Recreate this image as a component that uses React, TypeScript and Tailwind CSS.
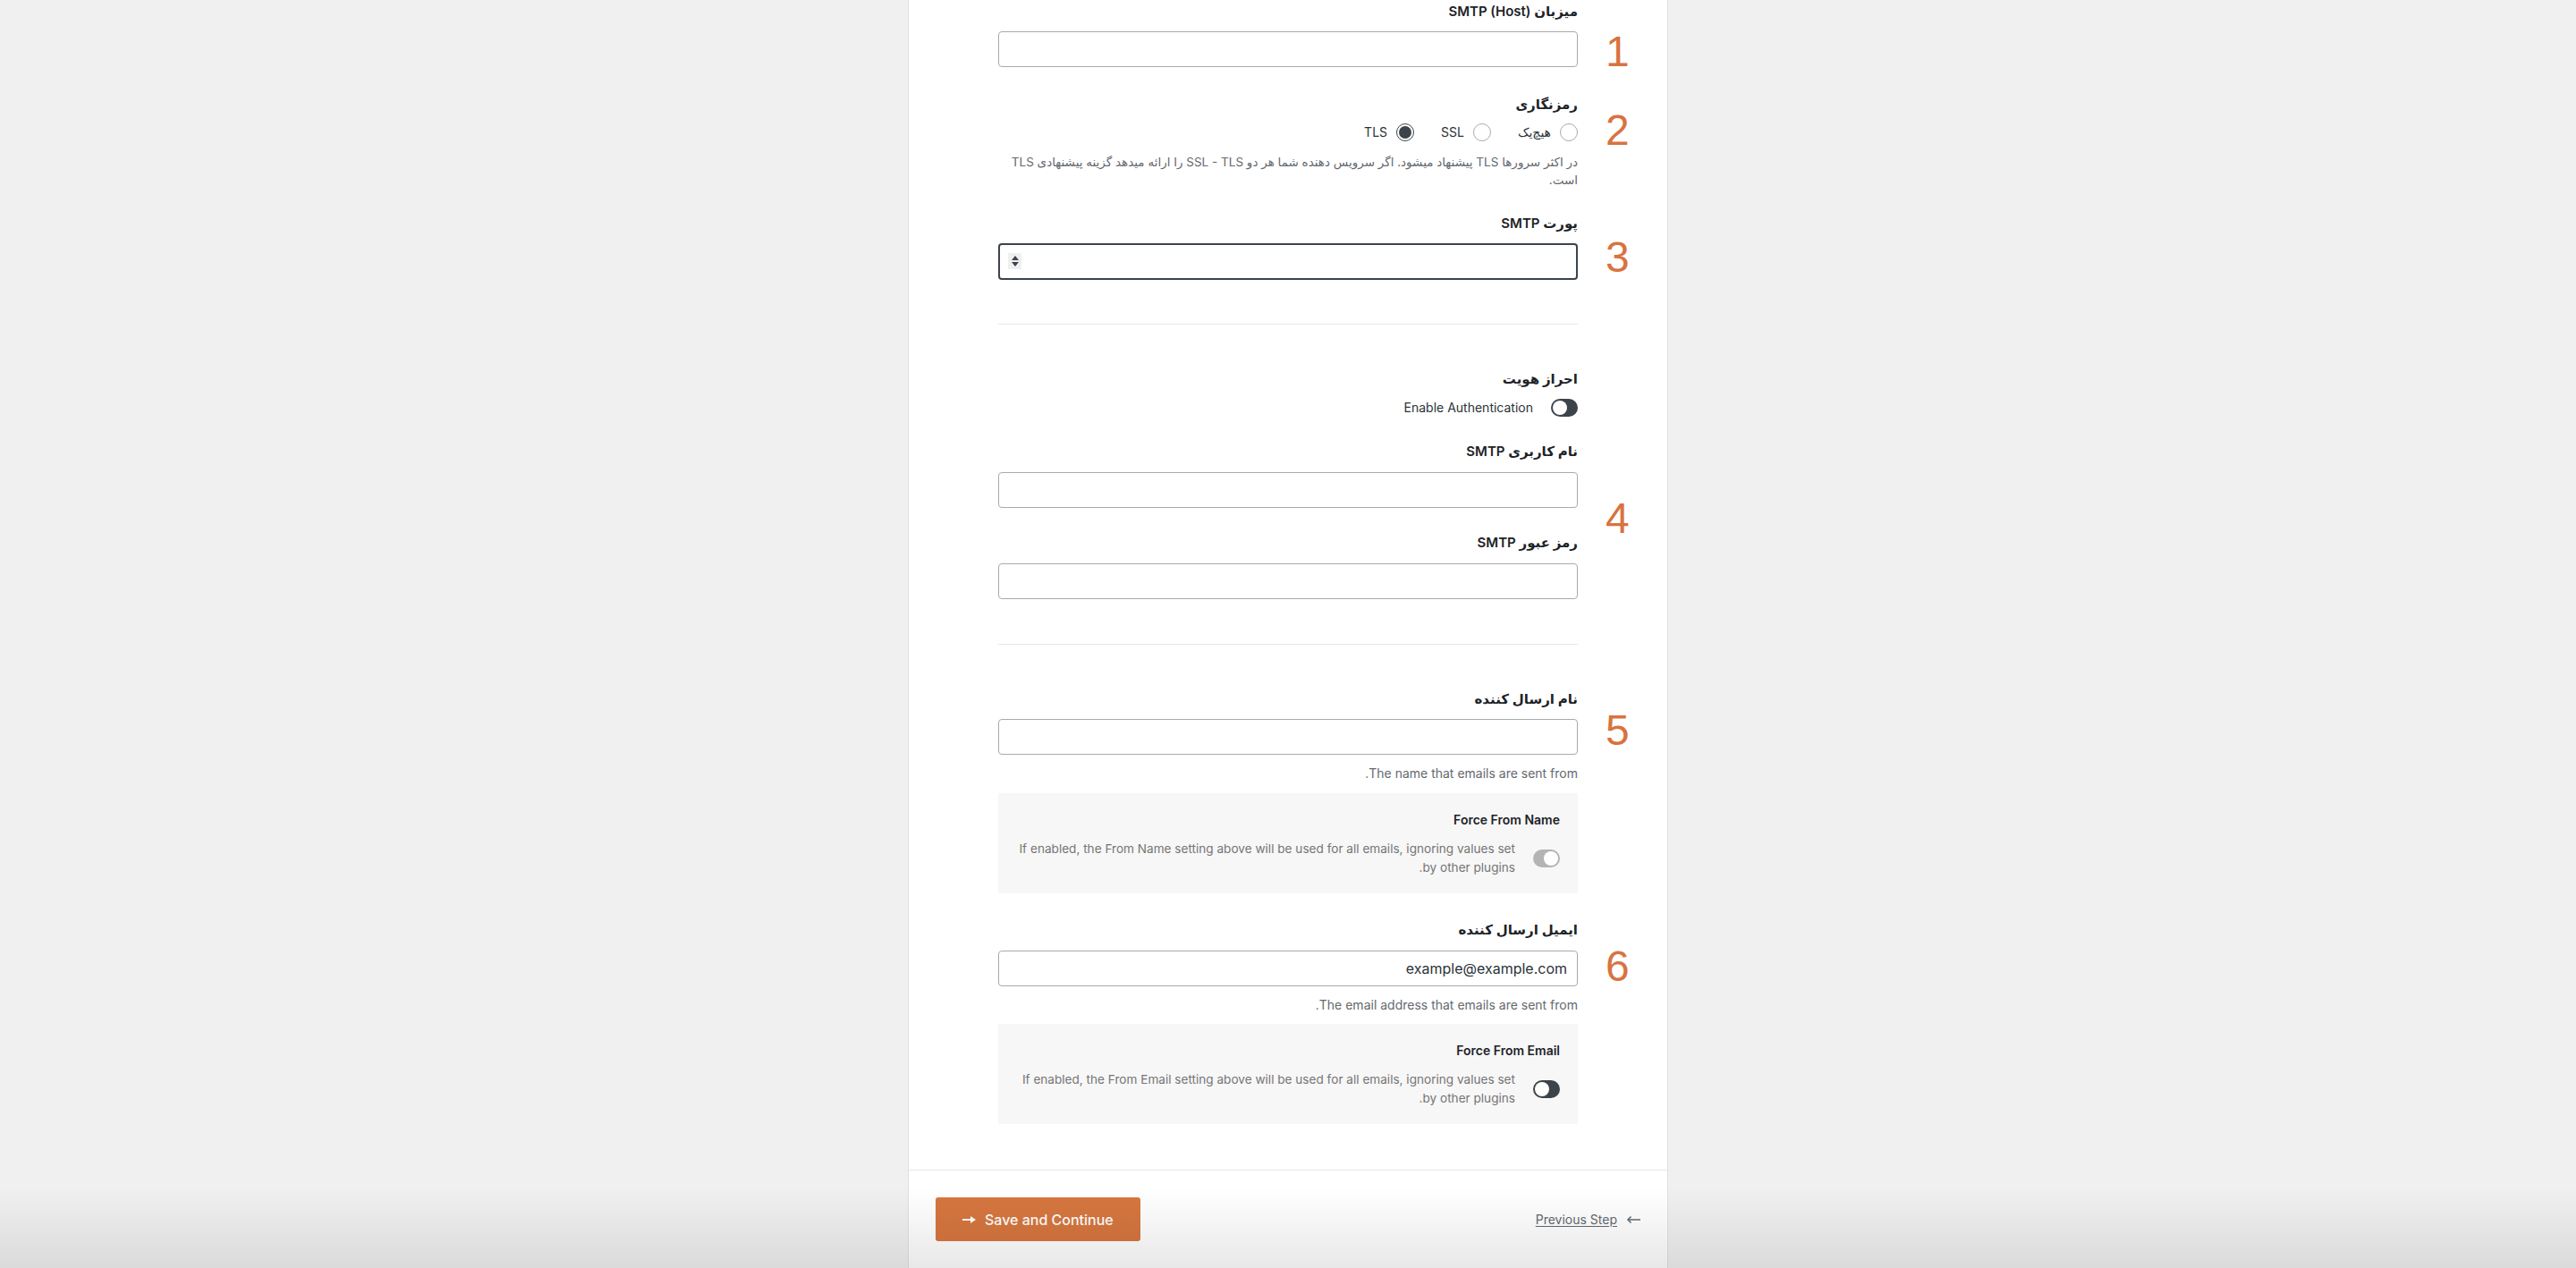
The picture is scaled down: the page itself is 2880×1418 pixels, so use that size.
import React from "react";

function Label({ children, className = "" }: { children: React.ReactNode; className?: string }) {
  return (
    <div className={"text-[15px] font-semibold leading-6 text-[#1d2327] " + className}>{children}</div>
  );
}

function TextInput({ value, className = "" }: { value?: string; className?: string }) {
  return (
    <div
      className={
        "flex h-10 w-full items-center rounded-[4px] border border-[#a7aaad] bg-white px-[11px] text-[16px] text-[#2c3338] " +
        className
      }
    >
      {value ? <span dir="ltr">{value}</span> : null}
    </div>
  );
}

function Toggle({ variant }: { variant: "dark" | "grey" }) {
  if (variant === "dark") {
    return (
      <div dir="ltr" className="flex h-5 w-[30px] shrink-0 items-center justify-start rounded-full bg-[#3c434a] p-[2px]">
        <div className="h-4 w-4 rounded-full bg-white" />
      </div>
    );
  }
  return (
    <div dir="ltr" className="flex h-5 w-[30px] shrink-0 items-center justify-end rounded-full bg-[#b4b4b4] p-[2px]">
      <div className="h-4 w-4 rounded-full bg-white" />
    </div>
  );
}

function Radio({ checked, label }: { checked?: boolean; label: string }) {
  return (
    <div className="flex items-center gap-[10px]">
      <div
        className={
          "flex h-5 w-5 items-center justify-center rounded-full border bg-white " +
          (checked ? "border-[#3c434a]" : "border-[#a7aaad]")
        }
      >
        {checked ? <div className="h-[14px] w-[14px] rounded-full bg-[#3c434a]" /> : null}
      </div>
      <span className="text-[14px] leading-5 text-[#2c3338]">{label}</span>
    </div>
  );
}

function ForceBox({ title, text, variant, className = "" }: { title: string; text: string; variant: "dark" | "grey"; className?: string }) {
  return (
    <div className={"bg-[#f7f7f7] px-5 pb-[18px] pt-[21px] " + className}>
      <div className="text-[14px] font-semibold leading-[18px] text-[#1d2327]">{title}</div>
      <div className="mt-[13px] flex items-center gap-5">
        <Toggle variant={variant} />
        <p className="text-[13.6px] leading-[21px] text-[#757575]">{text}</p>
      </div>
    </div>
  );
}

function Num({ n, top }: { n: string; top: number }) {
  return (
    <div
      className="absolute left-[779px] font-['Liberation_Sans',sans-serif] text-[48px] leading-none text-[#d8733f]"
      style={{ top }}
    >
      {n}
    </div>
  );
}

export default function App() {
  return (
    <div className="relative h-[1418px] overflow-hidden bg-[#f0f0f1] font-['Inter','DejaVu_Sans',sans-serif]">
      <div className="mx-auto flex h-full w-[850px] flex-col border-x border-[#e0e0e0] bg-white">
        <div dir="rtl" className="relative px-[100px] pt-px">
          {/* 1 */}
          <Label>
            میزبان <bdi>SMTP (Host)</bdi>
          </Label>
          <TextInput className="mt-[10px]" />

          {/* 2 */}
          <Label className="mt-[30px]">رمزنگاری</Label>
          <div className="mt-[9px] flex items-center gap-[30px]">
            <Radio label="هیچ‌یک" />
            <Radio label="SSL" />
            <Radio label="TLS" checked />
          </div>
          <p className="mt-[13px] text-[13.5px] leading-5 text-[#646970]">
            در اکثر سرورها TLS پیشنهاد میشود. اگر سرویس دهنده شما هر دو SSL - TLS را ارائه میدهد گزینه پیشنهادی TLS
            <br />
            است.
          </p>

          {/* 3 */}
          <Label className="mt-[27px]">پورت SMTP</Label>
          <div className="relative mt-[10px] flex h-[41px] w-full items-center rounded-[4px] border-2 border-[#3c434a] bg-white">
            <div dir="ltr" className="absolute left-[9px] top-[9px] flex h-[18px] w-[15px] flex-col items-center justify-center gap-[2px] bg-[#efefef]">
              <svg width="8" height="5" viewBox="0 0 8 5">
                <path d="M4 0L8 5H0z" fill="#3c434a" />
              </svg>
              <svg width="8" height="5" viewBox="0 0 8 5">
                <path d="M0 0h8L4 5z" fill="#3c434a" />
              </svg>
            </div>
          </div>

          <div className="mt-[49px] h-px bg-[#e6e6e6]" />

          {/* 4 */}
          <Label className="mt-[49px]">احراز هویت</Label>
          <div className="mt-[10px] flex items-center gap-5">
            <Toggle variant="dark" />
            <span className="text-[14px] leading-5 text-[#2c3338]">Enable Authentication</span>
          </div>
          <Label className="mt-[27px]">نام کاربری SMTP</Label>
          <TextInput className="mt-[11px]" />
          <Label className="mt-[27px]">رمز عبور SMTP</Label>
          <TextInput className="mt-[11px]" />

          <div className="mt-[50px] h-px bg-[#e6e6e6]" />

          {/* 5 */}
          <Label className="mt-[49px]">نام ارسال کننده</Label>
          <TextInput className="mt-[10px]" />
          <p className="mt-[11px] text-[14px] leading-5 text-[#646970]">The name that emails are sent from.</p>
          <ForceBox
            className="mt-[12px]"
            title="Force From Name"
            variant="grey"
            text="If enabled, the From Name setting above will be used for all emails, ignoring values set by other plugins."
          />

          {/* 6 */}
          <Label className="mt-[29px]">ایمیل ارسال کننده</Label>
          <TextInput className="mt-[11px]" value="example@example.com" />
          <p className="mt-[11px] text-[14px] leading-5 text-[#646970]">The email address that emails are sent from.</p>
          <ForceBox
            className="mt-[11px]"
            title="Force From Email"
            variant="dark"
            text="If enabled, the From Email setting above will be used for all emails, ignoring values set by other plugins."
          />

          <Num n="1" top={34} />
          <Num n="2" top={122} />
          <Num n="3" top={264} />
          <Num n="4" top={556} />
          <Num n="5" top={793} />
          <Num n="6" top={1057} />
        </div>

        <div className="mt-[51px] flex items-center justify-between border-t border-[#e6e6e6] px-[30px] pt-[30px]">
          <button className="flex h-[49px] items-center gap-[10px] rounded-[3px] bg-[#d6763f] px-[30px] text-[16px] font-medium text-white">
            <svg width="15" height="12" viewBox="0 0 15 12">
              <path d="M0 6h10" stroke="white" strokeWidth="2" />
              <path d="M9 2l6 4-6 4z" fill="white" />
            </svg>
            <span>Save and Continue</span>
          </button>
          <div className="flex items-center gap-[10px] text-[14px] text-[#646970]">
            <span className="underline underline-offset-2">Previous Step</span>
            <svg width="16" height="10" viewBox="0 0 16 10">
              <path d="M2 5h14" stroke="#646970" strokeWidth="1.5" />
              <path d="M5.5 1.5L2 5l3.5 3.5" stroke="#646970" strokeWidth="1.5" fill="none" />
            </svg>
          </div>
        </div>
      </div>
      <div className="pointer-events-none absolute inset-x-0 bottom-0 h-[90px] bg-linear-to-b from-transparent to-black/[0.09]" />
    </div>
  );
}
